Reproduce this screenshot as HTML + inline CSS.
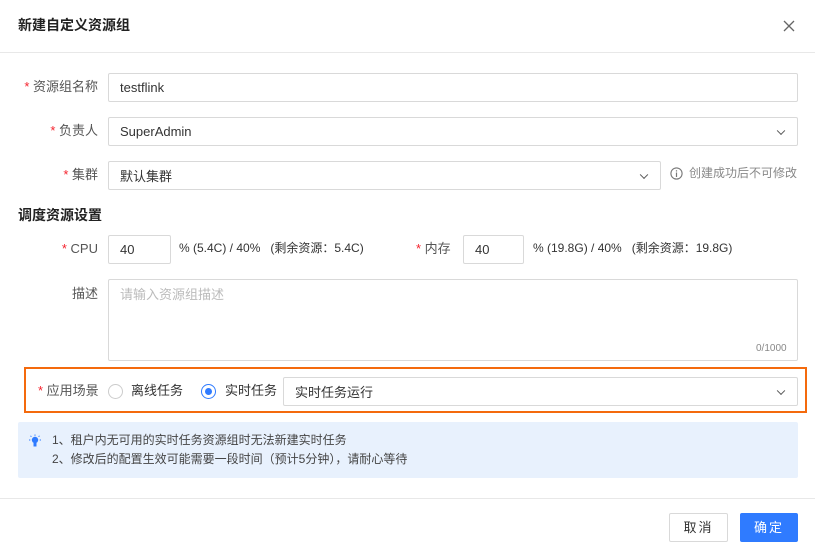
<!DOCTYPE html>
<html><head><meta charset="utf-8"><style>
*{box-sizing:border-box;margin:0;padding:0}
body{width:815px;height:555px;background:#fff;font-family:"Liberation Sans","Noto Sans CJK SC",sans-serif;font-size:13px;color:#333;position:relative;overflow:hidden}
.a{position:absolute}
.inp{position:absolute;border:1px solid #d9d9d9;border-radius:2px;background:#fff;padding-left:11px;display:flex;align-items:center;color:#333}
.lbl{position:absolute;text-align:right;color:#555;width:90px;left:8px;line-height:19px}
.lbl b,.st{color:#f5222d;font-weight:normal}
.chev{position:absolute;right:13px;top:50%;width:6px;height:6px;border-right:1.2px solid #555;border-bottom:1.2px solid #555;transform:translateY(-70%) rotate(45deg)}
.t{position:absolute;white-space:nowrap;line-height:19px}
</style></head><body>
<div class="t" style="left:18px;top:16px;font-size:14px;font-weight:bold;color:#222">新建自定义资源组</div>
<svg class="a" style="left:783px;top:20px" width="12" height="12"><path d="M1 1L11 11M11 1L1 11" stroke="#666" stroke-width="1.3"/></svg>
<div class="a" style="left:0;top:52px;width:815px;height:1px;background:#e8e8e8"></div>

<div class="lbl" style="top:77px"><b>* </b>资源组名称</div>
<div class="inp" style="left:108px;top:73px;width:690px;height:29px">testflink</div>

<div class="lbl" style="top:121px"><b>* </b>负责人</div>
<div class="inp" style="left:108px;top:117px;width:690px;height:29px">SuperAdmin<span class="chev"></span></div>

<div class="lbl" style="top:165px"><b>* </b>集群</div>
<div class="inp" style="left:108px;top:161px;width:553px;height:29px">默认集群<span class="chev"></span></div>
<svg class="a" style="left:670px;top:167px" width="13" height="13"><circle cx="6.5" cy="6.5" r="5.6" fill="none" stroke="#777" stroke-width="1.1"/><path d="M6.5 5.5V10M6.5 3.3V4.5" stroke="#777" stroke-width="1.2"/></svg>
<div class="t" style="left:689px;top:164px;color:#888;font-size:12px">创建成功后不可修改</div>

<div class="t" style="left:18px;top:206px;font-size:14px;font-weight:bold;color:#222">调度资源设置</div>

<div class="lbl" style="top:239px"><b>* </b>CPU</div>
<div class="inp" style="left:108px;top:235px;width:63px;height:29px">40</div>
<div class="t" style="left:179px;top:239px;font-size:12px">% (5.4C) / 40% &nbsp;&nbsp;(剩余资源：5.4C)</div>
<div class="t" style="left:416px;top:239px;color:#555"><span class="st">* </span>内存</div>
<div class="inp" style="left:463px;top:235px;width:61px;height:29px">40</div>
<div class="t" style="left:533px;top:239px;font-size:12px">% (19.8G) / 40% &nbsp;&nbsp;(剩余资源：19.8G)</div>

<div class="lbl" style="top:284px">描述</div>
<div class="inp" style="left:108px;top:279px;width:690px;height:82px;align-items:flex-start;padding-top:5px;color:#bbb;line-height:19px">请输入资源组描述</div>
<div class="t" style="left:756px;top:339px;font-size:10px;color:#888">0/1000</div>

<div class="a" style="left:24px;top:367px;width:783px;height:46px;border:2px solid #f46a0d"></div>
<div class="t" style="left:38px;top:381px;color:#555;width:60px;text-align:right"><span class="st">* </span>应用场景</div>
<div class="a" style="left:108px;top:384px;width:15px;height:15px;border:1px solid #ccc;border-radius:50%"></div>
<div class="t" style="left:131px;top:381px">离线任务</div>
<div class="a" style="left:201px;top:384px;width:15px;height:15px;border:1px solid #2f7bff;border-radius:50%"><div style="margin:3px;width:7px;height:7px;border-radius:50%;background:#2f7bff"></div></div>
<div class="t" style="left:225px;top:381px">实时任务</div>
<div class="inp" style="left:283px;top:377px;width:515px;height:29px">实时任务运行<span class="chev"></span></div>

<div class="a" style="left:18px;top:422px;width:780px;height:56px;background:#e8f1fd;border-radius:2px"></div>
<svg class="a" style="left:28px;top:434px" width="14" height="14"><circle cx="7" cy="6" r="3.2" fill="#2f7bff"/><rect x="5.5" y="9" width="3" height="3.5" fill="#2f7bff"/><path d="M7 0.5V1.8M1 6H2.3M11.7 6H13M2.5 1.8L3.4 2.7M11.5 1.8L10.6 2.7" stroke="#2f7bff" stroke-width="1"/></svg>
<div class="t" style="left:52px;top:431px;font-size:12px;color:#444">1、租户内无可用的实时任务资源组时无法新建实时任务</div>
<div class="t" style="left:52px;top:450px;font-size:12px;color:#444">2、修改后的配置生效可能需要一段时间（预计5分钟），请耐心等待</div>

<div class="a" style="left:0;top:498px;width:815px;height:1px;background:#e8e8e8"></div>
<div class="a" style="left:669px;top:513px;width:59px;height:29px;border:1px solid #d9d9d9;border-radius:2px;text-align:center;line-height:27px;letter-spacing:2px;color:#333">取消</div>
<div class="a" style="left:740px;top:513px;width:58px;height:29px;background:#2f7bff;border-radius:2px;text-align:center;line-height:29px;letter-spacing:2px;color:#fff">确定</div>
</body></html>
